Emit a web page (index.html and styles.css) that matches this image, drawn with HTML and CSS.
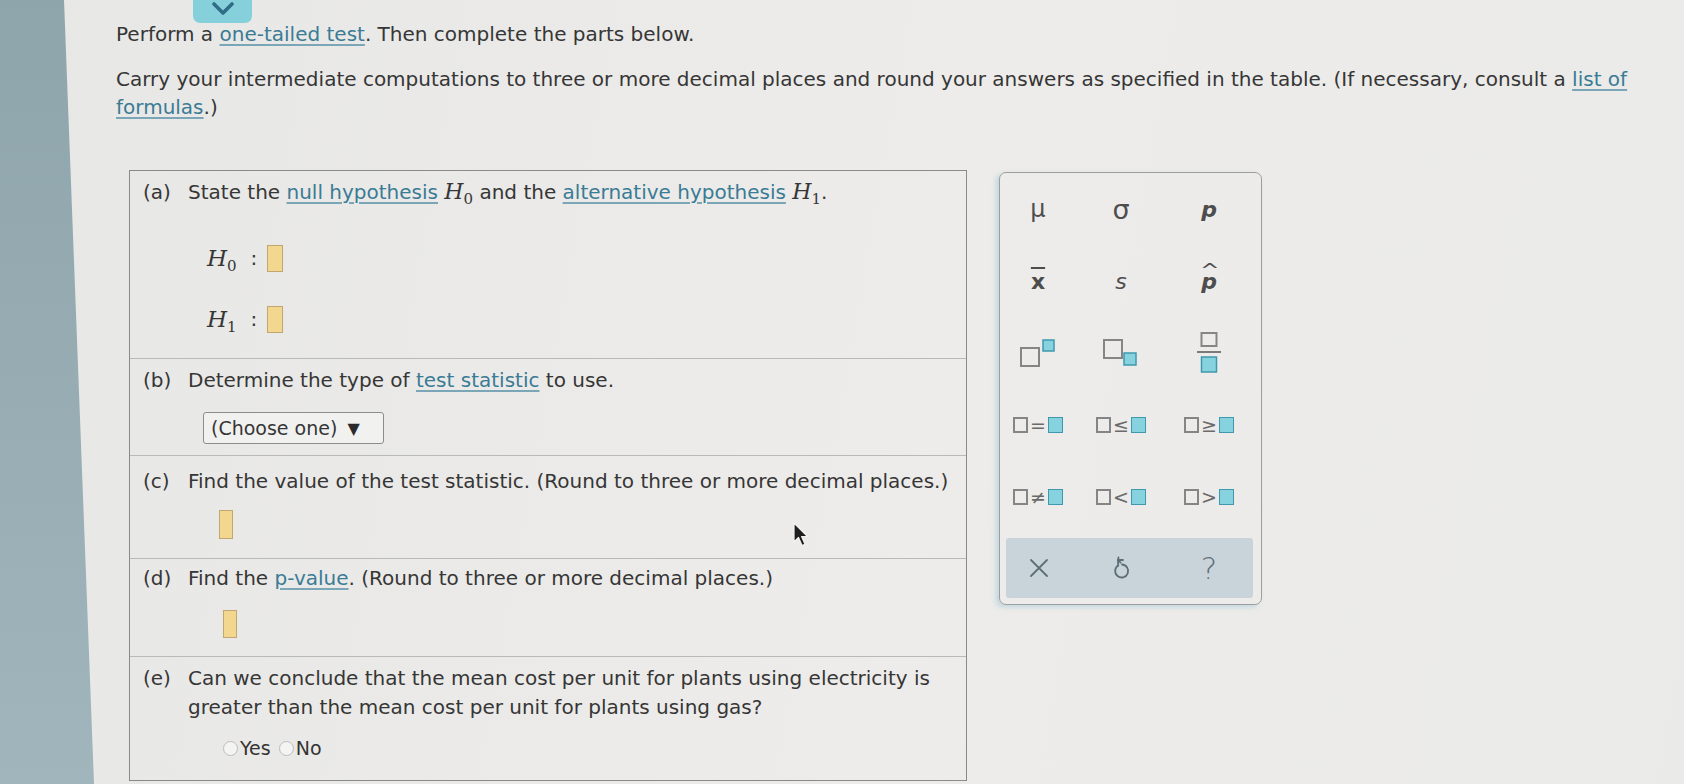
FILE: index.html
```html
<!DOCTYPE html>
<html lang="en">
<head>
<meta charset="utf-8">
<title>One-tailed test</title>
<link rel="stylesheet" href="styles.css">
</head>
<body>
<div class="strip"></div>
<main class="main">
  <div class="tab">
    <svg width="24" height="14" viewBox="0 0 24 14"><path d="M3 2 L12 11 L21 2" fill="none" stroke="#2f6d86" stroke-width="3.6" stroke-linecap="round" stroke-linejoin="round"/></svg>
  </div>
  <p class="intro">Perform a <a href="#">one-tailed test</a>. Then complete the parts below.</p>
  <p class="intro intro2">Carry your intermediate computations to three or more decimal places and round your answers as specified in the table. (If necessary, consult a <a href="#">list of</a><br><a href="#">formulas</a>.)</p>

  <div class="work">
    <div class="parts">
      <section class="part part-a">
        <div class="q"><span class="lbl">(a)</span><span class="qt">State the <a href="#">null hypothesis</a> <span class="m">H<sub>0</sub></span> and the <a href="#">alternative hypothesis</a> <span class="m">H<sub>1</sub></span>.</span></div>
        <div class="sub">
          <div class="hyp"><span class="m big">H<sub>0</sub></span><span class="colon">:</span><span class="inp"></span></div>
          <div class="hyp hyp2"><span class="m big">H<sub>1</sub></span><span class="colon">:</span><span class="inp"></span></div>
        </div>
      </section>
      <section class="part part-b">
        <div class="q"><span class="lbl">(b)</span><span class="qt">Determine the type of <a href="#">test statistic</a> to use.</span></div>
        <div class="sub">
          <div class="sel"><span>(Choose one)</span><span class="tri">&#9660;</span></div>
        </div>
      </section>
      <section class="part part-c">
        <div class="q"><span class="lbl">(c)</span><span class="qt">Find the value of the test statistic. (Round to three or more decimal places.)</span></div>
        <div class="sub"><span class="inp ans"></span></div>
        <svg class="cursor" width="16" height="26" viewBox="0 0 16 26"><path d="M1 1 L1 20 L5.5 15.5 L9 23.5 L12 22.2 L8.6 14.5 L14.5 14.5 Z" fill="#1e1e1e" stroke="#f2f2f2" stroke-width="1.2" stroke-linejoin="round"/></svg>
      </section>
      <section class="part part-d">
        <div class="q"><span class="lbl">(d)</span><span class="qt">Find the <a href="#">p-value</a>. (Round to three or more decimal places.)</span></div>
        <div class="sub"><span class="inp ans"></span></div>
      </section>
      <section class="part part-e">
        <div class="q"><span class="lbl">(e)</span><span class="qt">Can we conclude that the mean cost per unit for plants using electricity is<br>greater than the mean cost per unit for plants using gas?</span></div>
        <div class="sub radios">
          <label class="opt"><span class="radio"></span>Yes</label>
          <label class="opt"><span class="radio"></span>No</label>
        </div>
      </section>
    </div>

    <div class="keypad">
      <div class="keys">
        <span class="key sym">&#956;</span>
        <span class="key sym sigma">&#963;</span>
        <span class="key sym pb">p</span>
        <span class="key sym xbar">x</span>
        <span class="key sym si">s</span>
        <span class="key sym pb phat">p</span>
        <span class="key">
          <svg width="36" height="28" viewBox="0 0 36 28"><rect x="1" y="9" width="18" height="18" fill="none" stroke="#858585" stroke-width="2"/><rect x="23" y="1" width="11" height="11" fill="#86d3df" stroke="#3f98ae" stroke-width="1.5"/></svg>
        </span>
        <span class="key">
          <svg width="36" height="28" viewBox="0 0 36 28"><rect x="1" y="1" width="18" height="18" fill="none" stroke="#858585" stroke-width="2"/><rect x="21" y="14" width="12" height="12" fill="#86d3df" stroke="#3f98ae" stroke-width="1.5"/></svg>
        </span>
        <span class="key">
          <svg width="26" height="42" viewBox="0 0 26 42"><rect x="5.5" y="1" width="15" height="13" fill="none" stroke="#858585" stroke-width="2"/><line x1="1" y1="20" x2="25" y2="20" stroke="#7a7a7a" stroke-width="2"/><rect x="5.5" y="25" width="15" height="15" fill="#86d3df" stroke="#3f98ae" stroke-width="1.5"/></svg>
        </span>
        <span class="key rel"><i class="sq"></i><span class="op">=</span><i class="sq t"></i></span>
        <span class="key rel"><i class="sq"></i><span class="op">&#8804;</span><i class="sq t"></i></span>
        <span class="key rel"><i class="sq"></i><span class="op">&#8805;</span><i class="sq t"></i></span>
        <span class="key rel"><i class="sq"></i><span class="op">&#8800;</span><i class="sq t"></i></span>
        <span class="key rel"><i class="sq"></i><span class="op">&lt;</span><i class="sq t"></i></span>
        <span class="key rel"><i class="sq"></i><span class="op">&gt;</span><i class="sq t"></i></span>
      </div>
      <div class="bar">
        <span class="bkey">
          <svg width="22" height="22" viewBox="0 0 22 22"><path d="M3 3 L19 19 M19 3 L3 19" stroke="#5f6f78" stroke-width="1.8" stroke-linecap="round"/></svg>
        </span>
        <span class="bkey">
          <svg width="22" height="26" viewBox="0 0 22 26"><path d="M7 5 L12 5" fill="none" stroke="#5f6f78" stroke-width="1.8" stroke-linecap="round"/><path d="M7.5 2.5 L7 5.2 L9.6 7.6" fill="none" stroke="#5f6f78" stroke-width="1.8" stroke-linecap="round" stroke-linejoin="round"/><path d="M7.2 10.5 A6.5 6.5 0 1 0 11 9.5" fill="none" stroke="#5f6f78" stroke-width="1.8" stroke-linecap="round"/><path d="M7 5.2 L7.2 10.5" fill="none" stroke="#5f6f78" stroke-width="1.8" stroke-linecap="round"/></svg>
        </span>
        <span class="bkey q-mark">?</span>
      </div>
    </div>
  </div>
</main>
</body>
</html>
```

FILE: styles.css
```css
html, body {
  margin: 0;
  height: 784px;
  overflow: hidden;
}

body {
  display: flex;
  background: linear-gradient(100deg, #e7e7e5 0%, #edecea 55%, #eaeae8 100%);
  font-family: "DejaVu Sans", Verdana, sans-serif;
  color: #363636;
}

.strip {
  flex: none;
  width: 96px;
  background: linear-gradient(180deg, #8ea5ab 0%, #97adb3 50%, #a0b6bc 100%);
  clip-path: polygon(0 0, 64px 0, 94px 100%, 0 100%);
}

.main {
  position: relative;
  flex: 1;
  padding: 20px 0 0 20px;
}

.tab {
  position: absolute;
  left: 97px;
  top: 0;
  width: 59px;
  height: 23px;
  background: #86d0dc;
  border-radius: 0 0 7px 7px;
  display: flex;
  justify-content: center;
  align-items: flex-start;
  padding-top: 2px;
  box-sizing: border-box;
}

a {
  color: #3a7b95;
  text-decoration: underline;
  text-decoration-color: #7aa6b8;
  text-underline-offset: 3px;
}

.intro {
  margin: 0;
  font-size: 20px;
  line-height: 28px;
}

.intro2 {
  margin-top: 17px;
}

.work {
  display: flex;
  align-items: flex-start;
  gap: 32px;
  margin: 49px 0 0 13px;
}

.parts {
  width: 838px;
  flex: none;
  box-sizing: border-box;
  border: 1px solid #8a8a8a;
}

.part {
  position: relative;
  border-top: 1px solid #b9b9b9;
  padding: 7px 0 0 13px;
}

.part-a {
  border-top: none;
  padding-bottom: 19px;
}

.part-b { padding-bottom: 11px; }
.part-c { padding-top: 11px; padding-bottom: 19px; }
.part-d { padding-top: 5px; padding-bottom: 18px; }
.part-e { padding-bottom: 20px; }

.q {
  display: flex;
  font-size: 20px;
  line-height: 28px;
}

.part-e .q {
  line-height: 29px;
}

.lbl {
  flex: none;
  width: 45px;
}

.sub {
  padding-left: 60px;
}

.m {
  font-family: "DejaVu Serif", "Liberation Serif", serif;
  font-style: italic;
  font-size: 22px;
  color: #363636;
}

.m sub {
  font-style: normal;
  font-size: 15px;
  vertical-align: -5px;
  line-height: 0;
}

.m.big {
  font-size: 23px;
}

.hyp {
  display: flex;
  align-items: center;
  height: 40px;
  margin-top: 32px;
  padding-left: 4px;
}

.hyp2 {
  margin-top: 21px;
}

.colon {
  font-size: 20px;
  margin: 0 10px 0 14px;
}

.inp {
  display: inline-block;
  width: 16px;
  height: 27px;
  box-sizing: border-box;
  background: #f3d78f;
  border: 1px solid #c0a772;
}

.ans {
  display: block;
  width: 14px;
  margin: 15px 0 0 16px;
  height: 29px;
}

.part-d .ans {
  margin-top: 18px;
  margin-left: 20px;
  height: 28px;
}

.sel {
  display: flex;
  align-items: center;
  gap: 10px;
  width: 181px;
  height: 32px;
  box-sizing: border-box;
  margin-top: 18px;
  padding-left: 7px;
  border: 1px solid #8d8d8d;
  border-radius: 3px;
  background: #f1f1f0;
  font-size: 19px;
  color: #363636;
}

.tri {
  font-size: 16px;
  color: #2a2a2a;
}

.cursor {
  position: absolute;
  left: 663px;
  top: 66px;
}

.radios {
  display: flex;
  gap: 8px;
  align-items: center;
  height: 24px;
  margin-top: 14px;
  padding-left: 80px;
}

.opt {
  display: flex;
  align-items: center;
  gap: 2px;
  font-size: 19px;
  color: #333;
}

.radio {
  width: 13px;
  height: 13px;
  border-radius: 50%;
  border: 1px solid #bdbdbd;
  background: #f4f4f3;
}

.keypad {
  flex: none;
  width: 263px;
  height: 433px;
  margin-top: 2px;
  box-sizing: border-box;
  border: 1px solid #9e9e9e;
  border-radius: 7px;
  box-shadow: -3px 2px 5px rgba(110, 175, 205, 0.35);
}

.keys {
  display: grid;
  grid-template-columns: 76px 90px 86px;
  grid-auto-rows: 72px;
}

.key {
  display: flex;
  align-items: center;
  justify-content: center;
  color: #4d4d4d;
}

.sym {
  font-family: "DejaVu Sans", sans-serif;
  font-size: 24px;
}

.sigma {
  font-size: 27px;
}

.pb {
  font-weight: bold;
  font-style: italic;
  font-size: 22px;
}

.si {
  font-style: italic;
  font-size: 22px;
}

.xbar {
  font-size: 22px;
  font-weight: bold;
  text-decoration: overline;
  text-decoration-thickness: 2px;
}

.phat {
  position: relative;
}

.phat::before {
  content: "^";
  position: absolute;
  top: 14px;
  left: 50%;
  transform: translateX(-45%) scaleX(1.3);
  font-style: normal;
  font-weight: normal;
  font-size: 18px;
}

.rel {
  gap: 2px;
}

.sq {
  display: block;
  width: 15px;
  height: 16px;
  box-sizing: border-box;
  border: 2px solid #858585;
}

.sq.t {
  background: #86d3df;
  border: 1.5px solid #3f98ae;
}

.op {
  font-size: 19px;
  color: #6a6a6a;
  line-height: 1;
}

.bar {
  display: grid;
  grid-template-columns: 66px 100px 74px;
  height: 60px;
  margin: 5px 8px 0 6px;
  background: #c9d4da;
  border-radius: 3px;
}

.bkey {
  display: flex;
  align-items: center;
  justify-content: center;
  color: #5f6f78;
}

.q-mark {
  font-size: 31px;
  font-weight: 300;
  font-family: "DejaVu Sans", sans-serif;
}
```
